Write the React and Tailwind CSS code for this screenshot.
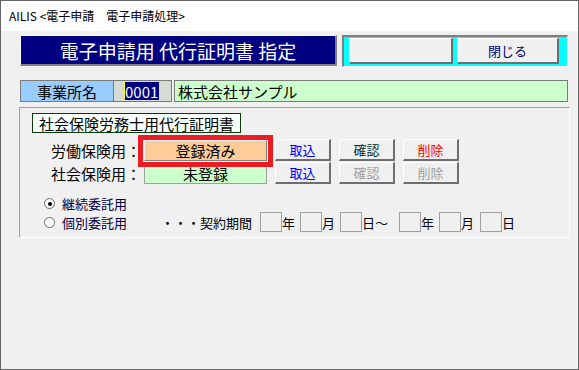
import React from "react";

const jp = { fontFamily: "'Noto Sans CJK JP', 'Liberation Sans', sans-serif" };

function Btn({ w, color, children }) {
  return (
    <div
      className={`${w} h-[22px] flex items-center justify-center bg-[#f0f0f0] border-t border-l border-white border-b-2 border-r-2 border-b-[#6d6d6d] border-r-[#6d6d6d] text-[13px] leading-none ${color}`}
    >
      {children}
    </div>
  );
}

function DateBox() {
  return <div className="w-[22px] h-[20px] border border-[#a0a0a0] bg-[#f0f0f0]" />;
}

function Radio({ checked }) {
  return (
    <div className="w-[11px] h-[11px] rounded-full border border-[#6a6a6a] bg-white flex items-center justify-center">
      {checked && <div className="w-[4px] h-[4px] rounded-full bg-black" />}
    </div>
  );
}

export default function App() {
  return (
    <div
      className="w-[579px] h-[370px] border border-[#646464] bg-[#f0f0f0] flex flex-col text-black overflow-hidden"
      style={jp}
    >
      {/* title bar */}
      <div className="h-[30px] bg-white flex items-center pl-[8px] text-[12px] leading-none">
        AILIS &lt;電子申請　電子申請処理&gt;
      </div>

      <div className="flex-1 pl-[19px] pt-[4px]">
        {/* header row */}
        <div className="flex items-start">
          <div className="w-[317px] h-[31px] bg-[#000080] border-t border-l border-white border-b-2 border-r-2 border-b-[#808080] border-r-[#808080] flex items-center justify-center text-white text-[19px] leading-none">
            電子申請用 代行証明書 指定
          </div>
          <div className="ml-[5px] w-[226px] h-[32px] bg-[#00ffff] border-t-2 border-l-2 border-[#808080] border-b border-r border-b-white border-r-white flex items-start gap-[4px] pl-[5px] pt-[1px]">
            <div className="w-[104px] h-[26px] bg-[#f0f0f0] border-t border-l border-white border-b-2 border-r-2 border-b-[#6d6d6d] border-r-[#6d6d6d]" />
            <div className="w-[102px] h-[26px] bg-[#f0f0f0] border-t border-l border-white border-b-2 border-r-2 border-b-[#6d6d6d] border-r-[#6d6d6d] flex items-center justify-center text-[13px] text-[#000080] leading-none">
              閉じる
            </div>
          </div>
        </div>

        {/* office row */}
        <div className="mt-[13px] flex items-stretch h-[22px]">
          <div className="w-[94px] bg-[#99ccff] border border-[#7a7a7a] flex items-center justify-center text-[15px] leading-none">
            事業所名
          </div>
          <div className="w-[58px] bg-[#d4dcd4] border border-[#7a7a7a] border-l-0 flex items-center pl-[10px]">
            <div className="h-[18px] w-[35px] bg-[#000080] border-l border-[#ffff00] text-white text-[15px] leading-none flex items-center">
              0001
            </div>
          </div>
          <div className="ml-[2px] w-[394px] bg-[#ccffcc] border border-[#7a7a7a] flex items-center pl-[3px] text-[15px] leading-none">
            株式会社サンプル
          </div>
        </div>

        {/* group box */}
        <div className="mt-[5px] -ml-px w-[551px] h-[131px] border border-t-[#a0a0a0] border-l-[#a0a0a0] border-b-white border-r-white flex flex-col pl-[12px] pt-[5px]">
          <div className="w-[209px] h-[20px] bg-[#f5fffa] border border-[#0a3a0a] flex items-center pl-[6px] text-[15px] leading-none">
            社会保険労務士用代行証明書
          </div>

          <div className="mt-[6px] flex flex-col gap-[1px]">
            <div className="flex items-center h-[22px]">
              <div className="ml-[19px] w-[93px] text-[15px] leading-none">労働保険用：</div>
              <div className="relative w-[123px] h-[21px]">
                <div className="w-full h-full bg-[#ffcc99] border-b border-r border-[#808080] border-t border-l border-t-[#f8f8f8] border-l-[#f8f8f8] flex items-center justify-center text-[15px] leading-none">
                  登録済み
                </div>
                <div className="absolute -left-[6px] -top-[5px] -right-[6px] -bottom-[6px] border-[5px] border-[#ec1c24]" />
              </div>
              <div className="ml-[8px] flex gap-[8px]">
                <Btn w="w-[56px]" color="text-[#0000ff]">取込</Btn>
                <Btn w="w-[56px]" color="text-[#003030]">確認</Btn>
                <Btn w="w-[56px]" color="text-[#ff0000]">削除</Btn>
              </div>
            </div>
            <div className="flex items-center h-[22px]">
              <div className="ml-[19px] w-[93px] text-[15px] leading-none">社会保険用：</div>
              <div className="w-[123px] h-[21px] bg-[#ccffcc] border border-[#a0a0a0] flex items-center justify-center text-[15px] leading-none">
                未登録
              </div>
              <div className="ml-[8px] flex gap-[8px]">
                <Btn w="w-[56px]" color="text-[#0000ff]">取込</Btn>
                <Btn w="w-[56px]" color="text-[#a0a0a0]">確認</Btn>
                <Btn w="w-[56px]" color="text-[#a0a0a0]">削除</Btn>
              </div>
            </div>
          </div>

          <div className="mt-[11px] ml-[12px] flex items-center h-[17px] text-[13px] leading-none">
            <Radio checked />
            <span className="ml-[7px] text-[#000040]">継続委託用</span>
          </div>
          <div className="ml-[12px] flex items-center h-[20px] text-[13px] leading-none">
            <Radio />
            <span className="ml-[7px] w-[65px] text-[#000040]">個別委託用</span>
            <span className="ml-[34px] w-[99px]">・・・契約期間</span>
            <DateBox />
            <span className="w-[18px]">年</span>
            <DateBox />
            <span className="w-[18px]">月</span>
            <DateBox />
            <span className="w-[37px]">日～</span>
            <DateBox />
            <span className="w-[18px]">年</span>
            <DateBox />
            <span className="w-[19px]">月</span>
            <DateBox />
            <span>日</span>
          </div>
        </div>
      </div>
    </div>
  );
}
